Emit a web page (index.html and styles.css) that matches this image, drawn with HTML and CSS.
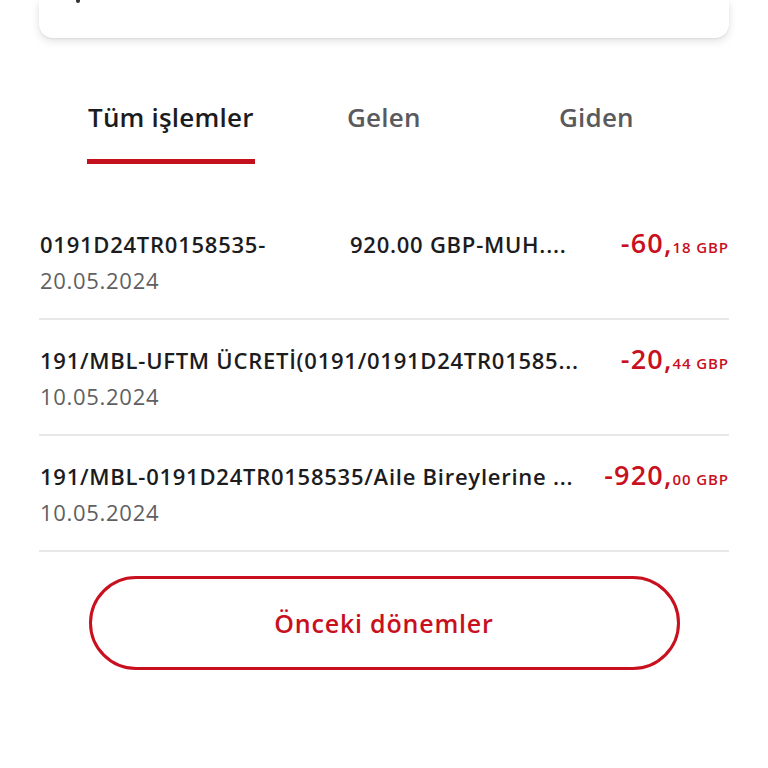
FILE: index.html
```html
<!DOCTYPE html>
<html lang="tr">
<head>
<meta charset="utf-8">
<link rel="stylesheet" href="styles.css">
</head>
<body>
<div class="card"><span class="card-mark"></span></div>
<nav class="tabs">
  <div class="tab active"><span class="tab-label">Tüm işlemler</span></div>
  <div class="tab"><span class="tab-label">Gelen</span></div>
  <div class="tab"><span class="tab-label">Giden</span></div>
</nav>
<ul class="list">
  <li class="row">
    <div class="info">
      <div class="title pre">0191D24TR0158535-             920.00 GBP-MUH....</div>
      <div class="date">20.05.2024</div>
    </div>
    <div class="amount"><span class="int">-60,</span><span class="dec">18 GBP</span></div>
  </li>
  <li class="row">
    <div class="info">
      <div class="title">191/MBL-UFTM ÜCRETİ(0191/0191D24TR01585...</div>
      <div class="date">10.05.2024</div>
    </div>
    <div class="amount"><span class="int">-20,</span><span class="dec">44 GBP</span></div>
  </li>
  <li class="row">
    <div class="info">
      <div class="title">191/MBL-0191D24TR0158535/Aile Bireylerine ...</div>
      <div class="date">10.05.2024</div>
    </div>
    <div class="amount"><span class="int">-920,</span><span class="dec">00 GBP</span></div>
  </li>
</ul>
<div class="actions">
  <button class="btn-outline">Önceki dönemler</button>
</div>
</body>
</html>
```
FILE: styles.css
```css
html, body {
  margin: 0;
  padding: 0;
  background: #ffffff;
  font-family: "Open Sans", "Noto Sans", sans-serif;
}
.card {
  height: 38px;
  margin: 0 39px;
  background: #fff;
  border-radius: 0 0 14px 14px;
  box-shadow: 0 3px 8px rgba(0,0,0,0.12), 0 1px 2px rgba(0,0,0,0.06);
  position: relative;
}
.card-mark {
  position: absolute;
  left: 37px;
  top: 0;
  width: 4px;
  height: 3px;
  border-radius: 0 0 2px 2px;
  background: #333;
}
.tabs {
  display: flex;
  margin: 63px 0 0 87px;
}
.tab {
  display: flex;
  flex-direction: column;
  align-items: flex-start;
}
.tab:nth-child(1) { width: 259px; }
.tab:nth-child(2) { width: 212px; }
.tab-label {
  font-size: 26px;
  font-weight: 600;
  letter-spacing: 0.2px;
  color: #5a5a5d;
  padding: 0 1px 26px;
  border-bottom: 5px solid transparent;
  line-height: 32px;
}
.tab.active .tab-label {
  color: #1c1c1e;
  border-bottom-color: #c3101c;
}
.list {
  list-style: none;
  margin: 40px 39px 0;
  padding: 0;
}
.row {
  display: flex;
  align-items: flex-start;
  justify-content: space-between;
  height: 116px;
  border-bottom: 2px solid #e8e8e8;
  box-sizing: border-box;
  padding-top: 27px;
}
.info {
  display: flex;
  flex-direction: column;
  gap: 10px;
  padding-left: 1px;
  min-width: 0;
}
.title {
  font-size: 22px;
  font-weight: 600;
  letter-spacing: 0.75px;
  color: #1c1c1e;
  line-height: 26px;
}
.pre { white-space: pre; }
.date {
  font-size: 22px;
  letter-spacing: 0.7px;
  color: #5f5f62;
  line-height: 26px;
}
.amount {
  color: #c8101e;
  white-space: nowrap;
  line-height: 30px;
  margin-top: -3px;
}
.int {
  font-size: 27px;
  font-weight: 600;
  letter-spacing: 1.2px;
}
.dec {
  font-size: 15px;
  font-weight: 600;
  letter-spacing: 0.9px;
}
.actions {
  display: flex;
  justify-content: center;
  margin-top: 24px;
}
.btn-outline {
  width: 591px;
  height: 94px;
  border: 3px solid #c8101e;
  border-radius: 47px;
  background: #fff;
  color: #c8101e;
  font-family: inherit;
  font-size: 25px;
  font-weight: 600;
  letter-spacing: 0.8px;
}
```
